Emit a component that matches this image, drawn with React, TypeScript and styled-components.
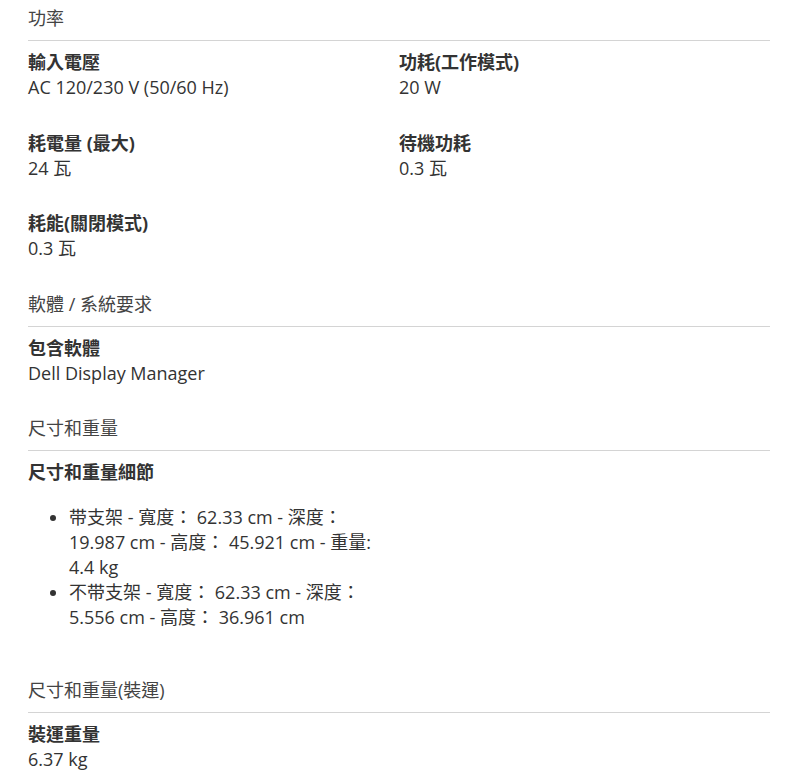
import { createGlobalStyle } from "styled-components";
import styled from "styled-components";

const Global = createGlobalStyle`
    body {
        margin: 0;
        background: #fff;
        font-family: "Open Sans", "Noto Sans CJK TC", sans-serif;
        color: #333;
    }
`;

const Page = styled.div`
    width: 742px;
    padding: 6px 0 0 28px;
`;

const Section = styled.section`
    display: flex;
    flex-direction: column;
`;

const Heading = styled.h2`
    margin: 0;
    padding-bottom: 9px;
    border-bottom: 1px solid #d4d4d4;
    font-size: 18px;
    line-height: 25px;
    font-weight: 400;
    color: #444;
`;

const Grid = styled.div`
    display: grid;
    grid-template-columns: 371px 371px;
    padding-top: 9px;
`;

const Item = styled.div<{ wide?: boolean }>`
    margin-bottom: 30.5px;
    font-size: 18px;
    line-height: 25px;
    grid-column: ${(p) => (p.wide ? "1 / 2" : "auto")};
`;

const Label = styled.div`
    font-weight: 700;
    color: #333;
`;

const Value = styled.div`
    color: #333;
`;

const List = styled.ul`
    margin: 20px 0 17px;
    padding-left: 41px;
    list-style: disc;

    li {
        line-height: 25px;
    }
`;

type Spec = { label: string; value?: string; list?: string[] };

const sections: { title: string; specs: Spec[] }[] = [
    {
        title: "功率",
        specs: [
            { label: "輸入電壓", value: "AC 120/230 V (50/60 Hz)" },
            { label: "功耗(工作模式)", value: "20 W" },
            { label: "耗電量 (最大)", value: "24 瓦" },
            { label: "待機功耗", value: "0.3 瓦" },
            { label: "耗能(關閉模式)", value: "0.3 瓦" },
        ],
    },
    {
        title: "軟體 / 系統要求",
        specs: [{ label: "包含軟體", value: "Dell Display Manager" }],
    },
    {
        title: "尺寸和重量",
        specs: [
            {
                label: "尺寸和重量細節",
                list: [
                    "带支架 - 寬度： 62.33 cm - 深度： 19.987 cm - 高度： 45.921 cm - 重量: 4.4 kg",
                    "不带支架 - 寬度： 62.33 cm - 深度： 5.556 cm - 高度： 36.961 cm",
                ],
            },
        ],
    },
    {
        title: "尺寸和重量(裝運)",
        specs: [{ label: "裝運重量", value: "6.37 kg" }],
    },
];

export default function App() {
    return (
        <Page>
            <Global />
            {sections.map((section) => (
                <Section key={section.title}>
                    <Heading>{section.title}</Heading>
                    <Grid>
                        {section.specs.map((spec) => (
                            <Item key={spec.label} wide={!!spec.list}>
                                <Label>{spec.label}</Label>
                                {spec.value && <Value>{spec.value}</Value>}
                                {spec.list && (
                                    <List>
                                        {spec.list.map((line) => (
                                            <li key={line}>{line}</li>
                                        ))}
                                    </List>
                                )}
                            </Item>
                        ))}
                    </Grid>
                </Section>
            ))}
        </Page>
    );
}
